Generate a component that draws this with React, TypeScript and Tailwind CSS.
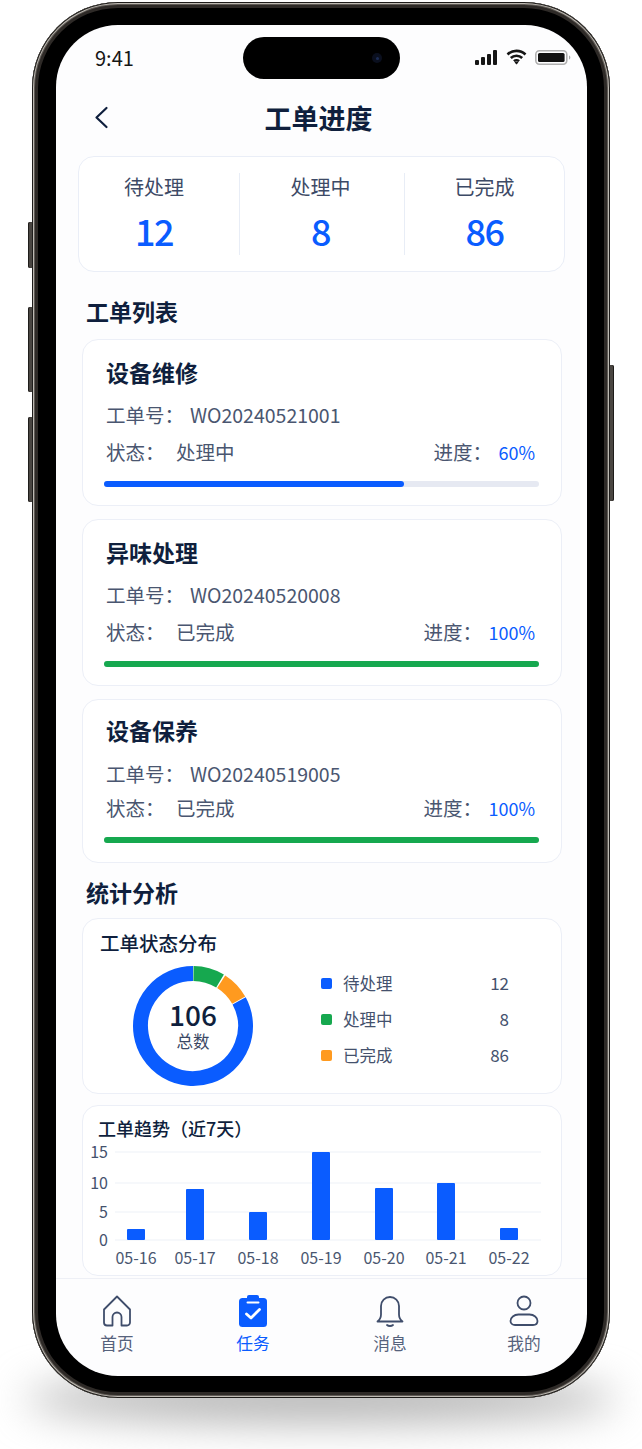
import React from "react";

const NAVY = "#0f1f3d";

function polar(cx: number, cy: number, r: number, deg: number) {
  const a = ((deg - 90) * Math.PI) / 180;
  return [cx + r * Math.cos(a), cy + r * Math.sin(a)];
}
function arc(start: number, end: number) {
  const [x1, y1] = polar(61, 61, 52.5, start);
  const [x2, y2] = polar(61, 61, 52.5, end);
  const large = end - start > 180 ? 1 : 0;
  return `M${x1} ${y1}A52.5 52.5 0 ${large} 1 ${x2} ${y2}`;
}

function Stat({ label, value, cls }: { label: string; value: string; cls: string }) {
  return (
    <div className={`h-[82px] flex flex-col items-center ${cls}`}>
      <div className="text-[20px] leading-[28px] text-[#3d4a66]">{label}</div>
      <div className="mt-[7px] text-[36px] leading-[44px] font-medium tracking-[-1.5px] text-[#0a5cff]">{value}</div>
    </div>
  );
}

function OrderCard({
  title, no, status, pct, bar, color, h, pt, rows, row2,
}: {
  title: string; no: string; status: string; pct: string; bar: string; color: string; h: string; pt: string; rows: string; row2: string;
}) {
  return (
    <div className={`rounded-[16px] border border-[#eceff7] bg-white pl-[21px] pr-[22px] ${h}`}>
      <div className={`pl-[2px] text-[23px] leading-[30px] font-bold ${pt}`} style={{ color: NAVY }}>{title}</div>
      <div className={`pl-[2px] text-[19.5px] leading-[28px] text-[#4a5670] ${rows}`}>
        <div className="flex">
          <span className="w-[84px]">工单号：</span>
          <span>{no}</span>
        </div>
      </div>
      <div className={`pl-[2px] pr-[4px] flex justify-between text-[19.5px] leading-[28px] text-[#4a5670] ${row2}`}>
        <div className="flex">
          <span className="w-[70px]">状态：</span>
          <span>{status}</span>
        </div>
        <div className="flex">
          <span className="w-[65px]">进度：</span>
          <span className="text-[18px] text-[#0a5cff]">{pct}</span>
        </div>
      </div>
      <div className="h-[6px] mt-[15px] rounded-full bg-[#e6e9f2]">
        <div className={`h-full rounded-full ${bar}`} style={{ backgroundColor: color }} />
      </div>
    </div>
  );
}

function LegendRow({ color, label, value }: { color: string; label: string; value: string }) {
  return (
    <div className="h-[36px] flex items-center">
      <span className={`w-[11px] h-[11px] rounded-[2px] ${color}`} />
      <span className="ml-[11px] text-[16.5px] text-[#44516d]">{label}</span>
      <span className="ml-auto text-[17px] text-[#44516d]">{value}</span>
    </div>
  );
}

function Chart() {
  const grid = [
    { y: 11, t: "15" },
    { y: 42, t: "10" },
    { y: 71, t: "5" },
    { y: 99, t: "0" },
  ];
  const bars = [
    { x: 44, top: 88 },
    { x: 103, top: 48 },
    { x: 166, top: 71 },
    { x: 229, top: 11 },
    { x: 292, top: 47 },
    { x: 354, top: 42 },
    { x: 417, top: 87 },
  ];
  const labels = [
    { x: 53, t: "05-16" },
    { x: 112, t: "05-17" },
    { x: 175, t: "05-18" },
    { x: 238, t: "05-19" },
    { x: 301, t: "05-20" },
    { x: 363, t: "05-21" },
    { x: 426, t: "05-22" },
  ];
  return (
    <svg viewBox="0 0 478 133" className="block w-[478px] h-[133px] overflow-visible">
      {grid.map((g) => (
        <g key={g.t}>
          <line x1="32" x2="458" y1={g.y} y2={g.y} stroke="#eef1f8" strokeWidth="1.2" />
          <text x="25" y={g.y + 6} textAnchor="end" fontSize="16" fill="#44516d">{g.t}</text>
        </g>
      ))}
      {bars.map((b) => (
        <rect key={b.x} x={b.x} y={b.top} width="18" height={99 - b.top} rx="1" fill="#0a5cff" />
      ))}
      {labels.map((l) => (
        <text key={l.t} x={l.x} y="123" textAnchor="middle" fontSize="16" fill="#4a5670">{l.t}</text>
      ))}
    </svg>
  );
}

function TabItem({ label, active, ml, children }: { label: string; active?: boolean; ml: string; children: React.ReactNode }) {
  return (
    <div className={`w-[40px] flex flex-col items-center ${ml}`}>
      <div className="h-[34px] flex items-center justify-center">{children}</div>
      <div className={`mt-[3px] whitespace-nowrap text-[16.7px] leading-[24px] ${active ? "text-[#0a5cff]" : "text-[#56627c]"}`}>{label}</div>
    </div>
  );
}

export default function App() {
  return (
    <div className="relative w-[642px] h-[1449px] overflow-hidden bg-white font-['Noto_Sans_CJK_SC','Noto_Sans',sans-serif]">
      {/* ground shadow */}
      <div className="absolute left-[25px] top-[1375px] w-[592px] h-[48px] rounded-[50%] bg-[#b4b4b4] blur-[20px]" />
      {/* side buttons */}
      <div className="absolute left-[28px] top-[222px] w-[5px] h-[46px] rounded-l-[2px] bg-[#4a4642] shadow-[inset_1px_0_0_#1e1c1a]" />
      <div className="absolute left-[28px] top-[307px] w-[5px] h-[85px] rounded-l-[2px] bg-[#4a4642] shadow-[inset_1px_0_0_#1e1c1a]" />
      <div className="absolute left-[28px] top-[417px] w-[5px] h-[85px] rounded-l-[2px] bg-[#4a4642] shadow-[inset_1px_0_0_#1e1c1a]" />
      <div className="absolute left-[609px] top-[365px] w-[5px] h-[136px] rounded-r-[2px] bg-[#4a4642] shadow-[inset_-1px_0_0_#1e1c1a]" />

      {/* phone */}
      <div className="relative ml-[32px] mt-[2px] w-[578px] h-[1396px] rounded-[86px] bg-black p-[23px_23px_22px_24px] shadow-[inset_0_0_0_1px_#1e1c1a,inset_0_0_0_2px_#bdb9b2,inset_0_0_0_3px_#5f5a55,inset_0_0_0_6px_#2e2a27]">
        <div className="relative w-[531px] h-[1351px] rounded-[62px] bg-[#fdfdfe] overflow-hidden flex flex-col">
          {/* island */}
          <div className="absolute left-[187px] top-[12px] w-[157px] h-[42px] rounded-full bg-black flex items-center justify-end pr-[18px]">
            <div className="w-[10px] h-[10px] rounded-full bg-[#0a0f1e] flex items-center justify-center">
              <div className="w-[3px] h-[3px] rounded-full bg-[#1c2c55]" />
            </div>
          </div>

          {/* status bar */}
          <div className="h-[54px] shrink-0 pl-[39px] pr-[16px] pt-[20px] flex items-start justify-between">
            <span className="text-[20px] leading-[26px] text-[#161616]">9:41</span>
            <div className="flex items-center gap-[8px] h-[24px]">
              <svg width="23" height="15" viewBox="0 0 23 15" fill="#161616">
                <rect x="0" y="10" width="4" height="5" rx="1" />
                <rect x="6" y="7" width="4" height="8" rx="1" />
                <rect x="12" y="4" width="4" height="11" rx="1" />
                <rect x="18" y="0" width="4" height="15" rx="1" />
              </svg>
              <svg width="21" height="16" viewBox="0 0 21 16" fill="none" stroke="#161616" strokeWidth="2.6">
                <path d="M1.5 5.5a13 13 0 0 1 18 0" />
                <path d="M4.8 9a8.2 8.2 0 0 1 11.4 0" />
                <path d="M8 12.2a3.6 3.6 0 0 1 5 0" />
                <path d="M10.5 15.6l-1.9-2.2a2.8 2.8 0 0 1 3.800 0z" fill="#161616" stroke="none" />
              </svg>
              <svg width="36" height="15" viewBox="0 0 36 15">
                <rect x="0.8" y="0.8" width="31" height="13.4" rx="3.6" fill="none" stroke="#b0b0b0" strokeWidth="1.6" />
                <rect x="3" y="3" width="26.6" height="9" rx="1.6" fill="#111" />
                <path d="M34 5.500v4c.8-.3 1.300-1 1.300-2s-.5-1.700-1.300-2z" fill="#a9a9a9" />
              </svg>
            </div>
          </div>

          {/* header */}
          <div className="h-[77px] shrink-0 relative flex items-center justify-center">
            <svg className="absolute left-[38px] top-[27px]" width="15" height="23" viewBox="0 0 15 23" fill="none" stroke={NAVY} strokeWidth="2.2" strokeLinecap="round" strokeLinejoin="round">
              <path d="M12.500 2L2.500 11.500l10 9.500" />
            </svg>
            <h1 className="text-[27px] leading-[36px] font-bold -ml-[6px]" style={{ color: NAVY }}>工单进度</h1>
          </div>

          {/* stats */}
          <div className="ml-[22px] w-[487px] h-[116px] shrink-0 rounded-[16px] border border-[#eaeef7] bg-white flex items-center">
            <Stat label="待处理" value="12" cls="w-[161px] pr-[10px] border-r border-[#e8edf6]" />
            <Stat label="处理中" value="8" cls="w-[165px] pr-[3px] border-r border-[#e8edf6]" />
            <Stat label="已完成" value="86" cls="flex-1" />
          </div>

          <h2 className="ml-[30px] mt-[24px] text-[23px] leading-[30px] font-bold shrink-0" style={{ color: NAVY }}>工单列表</h2>

          <div className="ml-[26px] w-[480px] mt-[13px] flex flex-col gap-[13px] shrink-0">
            <OrderCard title="设备维修" no="WO20240521001" status="处理中" pct="60%" bar="w-[69%]" color="#0a5cff" h="h-[167px]" pt="pt-[17px]" rows="mt-[14px]" row2="mt-[9px]" />
            <OrderCard title="异味处理" no="WO20240520008" status="已完成" pct="100%" bar="w-full" color="#16a84f" h="h-[167px]" pt="pt-[17px]" rows="mt-[14px]" row2="mt-[9px]" />
            <OrderCard title="设备保养" no="WO20240519005" status="已完成" pct="100%" bar="w-full" color="#16a84f" h="h-[164px]" pt="pt-[15px]" rows="mt-[15px]" row2="mt-[6px]" />
          </div>

          <h2 className="ml-[30px] mt-[14px] text-[23px] leading-[30px] font-bold shrink-0" style={{ color: NAVY }}>统计分析</h2>

          <div className="ml-[26px] w-[480px] h-[176px] mt-[11px] shrink-0 rounded-[16px] border border-[#eceff7] bg-white">
            <div className="ml-[17px] mt-[10px] text-[19.5px] leading-[28px] font-medium" style={{ color: NAVY }}>工单状态分布</div>
            <div className="flex mt-[8px]">
              <div className="relative ml-[49px] w-[122px] h-[122px]">
                <svg viewBox="0 0 122 122" className="w-[122px] h-[122px]" fill="none" strokeWidth="15">
                  <path d={arc(61.5, 360)} stroke="#0a5cff" />
                  <path d={arc(0.5, 31)} stroke="#16a84f" />
                  <path d={arc(32.5, 60.5)} stroke="#ff9a1f" />
                </svg>
                <div className="absolute inset-0 flex flex-col items-center justify-center">
                  <div className="text-[28px] leading-[30px] font-medium" style={{ color: NAVY }}>106</div>
                  <div className="text-[16.5px] leading-[24px] text-[#3a4763]">总数</div>
                </div>
              </div>
              <div className="ml-[67px] w-[188px] mt-0">
                <LegendRow color="bg-[#0a5cff]" label="待处理" value="12" />
                <LegendRow color="bg-[#16a84f]" label="处理中" value="8" />
                <LegendRow color="bg-[#ff9a1f]" label="已完成" value="86" />
              </div>
            </div>
          </div>

          <div className="ml-[26px] w-[480px] h-[171px] mt-[11px] shrink-0 rounded-[16px] border border-[#eceff7] bg-white">
            <div className="ml-[15px] mt-[9px] text-[18px] leading-[26px] font-medium" style={{ color: NAVY }}>工单趋势（近7天）</div>
            <Chart />
          </div>

          {/* tab bar */}
          <div className="mt-[2px] flex-1 border-t border-[#eef0f6] flex items-start pt-[15px] pl-[41px]">
            <TabItem label="首页" ml="ml-0">
              <svg width="30" height="32" viewBox="0 0 30 32" fill="none" stroke="#3f4d6b" strokeWidth="1.8" strokeLinejoin="round" strokeLinecap="round">
                <path d="M15 1.500L2 14.500V27.500a3 3 0 0 0 3 3h5.500V22a4.500 4.500 0 0 1 9 0v8.500H25a3 3 0 0 0 3-3V14.500z" />
              </svg>
            </TabItem>
            <TabItem label="任务" active ml="ml-[96px]">
              <svg width="28" height="32" viewBox="0 0 28 32">
                <rect x="0" y="3" width="28" height="29" rx="3.500" fill="#0a5cff" />
                <rect x="8" y="0" width="12" height="6.500" rx="2" fill="#0a5cff" />
                <path d="M8.500 7.500h11" stroke="#fff" strokeWidth="2" strokeLinecap="round" />
                <path d="M7.500 19l4.500 4 8.500-8.500" fill="none" stroke="#fff" strokeWidth="2.800" strokeLinecap="round" strokeLinejoin="round" />
              </svg>
            </TabItem>
            <TabItem label="消息" ml="ml-[97px]">
              <svg width="28" height="32" viewBox="0 0 28 32" fill="none" stroke="#3f4d6b" strokeWidth="1.8" strokeLinecap="round" strokeLinejoin="round">
                <path d="M1.500 26.500c2.500-2 3.500-3.500 3.500-7V11a9 9 0 0 1 18 0v8.500c0 3.500 1 5 3.500 7z" />
                <path d="M11 30c1.500 1.300 4.500 1.300 6 0" />
              </svg>
            </TabItem>
            <TabItem label="我的" ml="ml-[94px]">
              <svg width="30" height="32" viewBox="0 0 30 32" fill="none" stroke="#3f4d6b" strokeWidth="1.8">
                <circle cx="15" cy="8" r="6.500" />
                <path d="M9.500 19.500h11c4.500 0 8 3 8 6.500 0 2.500-2 4-4.500 4H6c-2.500 0-4.500-1.500-4.500-4 0-3.500 3.500-6.500 8-6.500z" />
              </svg>
            </TabItem>
          </div>
        </div>
      </div>
    </div>
  );
}
